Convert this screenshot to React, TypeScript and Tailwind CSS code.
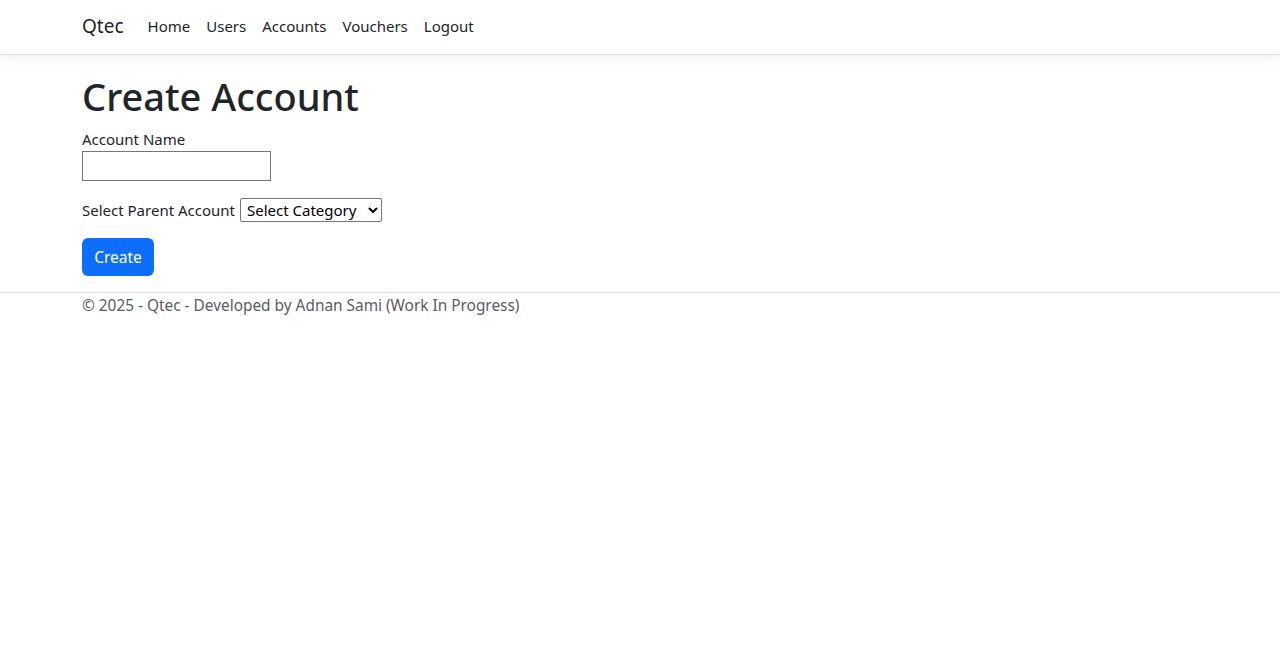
export default function App() {
  const links = ["Home", "Users", "Accounts", "Vouchers", "Logout"];

  return (
    <div className="min-h-[646px] bg-white font-['Noto_Sans',sans-serif] text-[16px] leading-6 text-[#212529]">
      {/* Navbar */}
      <nav className="mb-4 h-[55px] border-b border-[#dee2e6] bg-white shadow-[0_4px_12px_rgba(0,0,0,0.05)]">
        <div className="mx-auto flex h-[54px] w-[1140px] items-center px-3 pb-[2px]">
          <span className="mr-4 text-[19px] text-black/90">Qtec</span>
          <ul className="flex">
            {links.map((l) => (
              <li key={l}>
                <a className="block px-2 py-2 text-[15px] text-[#212529]">{l}</a>
              </li>
            ))}
          </ul>
        </div>
      </nav>

      {/* Content */}
      <main className="mx-auto w-[1140px] px-3 pb-4">
        <h1 className="mb-[7px] pt-[1px] text-[38px] font-medium leading-[48px]">Create Account</h1>

        <div className="mb-[17px]">
          <label className="block text-[15px]">Account Name</label>
          <input
            type="text"
            className="h-[30px] w-[189px] border border-[#767676] px-1 outline-none"
          />
        </div>

        <div className="mb-4 flex items-center text-[15px]">
          <label className="mr-[5px]">Select Parent Account</label>
          <select className="h-[24px] w-[142px] rounded-[2px] border border-[#767676] px-[2px] text-[15px] text-black">
            <option>Select Category</option>
          </select>
        </div>

        <button className="h-[38px] w-[72px] rounded-md bg-[#0d6efd] text-[15.5px] text-white">
          Create
        </button>
      </main>

      {/* Footer */}
      <footer className="border-t border-[#dee2e6]">
        <div className="mx-auto w-[1140px] px-3 pt-[1px] text-[15.4px] text-[#595c5f]">
          © 2025 - Qtec - Developed by Adnan Sami (Work In Progress)
        </div>
      </footer>
    </div>
  );
}
